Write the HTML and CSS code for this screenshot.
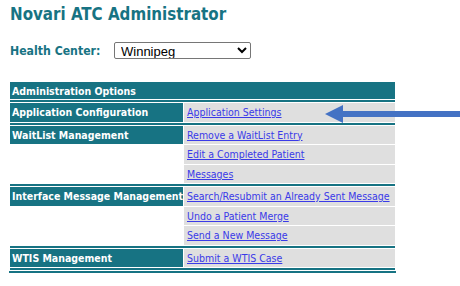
FILE: index.html
```html
<!DOCTYPE html>
<html lang="en">
  <head>
    <title>Novari ATC Administrator</title>
    <link rel="stylesheet" href="styles.css">
  </head>
  <body>
    <h1>Novari ATC Administrator</h1>
    <form id="center-form">
      <label for="health-center">Health Center:</label>
      <select id="health-center">
        <option>Winnipeg</option>
      </select>
    </form>
    <table id="admin-options">
      <colgroup>
        <col class="group-col">
        <col>
      </colgroup>
      <tr><th colspan="2">Administration Options</th></tr>
      <tr class="rule"><td colspan="2"></td></tr>
      <tr>
        <td class="group">Application Configuration</td>
        <td class="item"><a href="#">Application Settings</a></td>
      </tr>
      <tr class="rule"><td colspan="2"></td></tr>
      <tr>
        <td class="group">WaitList Management</td>
        <td class="item"><a href="#">Remove a WaitList Entry</a></td>
      </tr>
      <tr>
        <td></td>
        <td class="item"><a href="#">Edit a Completed Patient</a></td>
      </tr>
      <tr>
        <td></td>
        <td class="item"><a href="#">Messages</a></td>
      </tr>
      <tr class="rule"><td colspan="2"></td></tr>
      <tr>
        <td class="group">Interface Message Management</td>
        <td class="item"><a href="#">Search/Resubmit an Already Sent Message</a></td>
      </tr>
      <tr>
        <td></td>
        <td class="item"><a href="#">Undo a Patient Merge</a></td>
      </tr>
      <tr>
        <td></td>
        <td class="item"><a href="#">Send a New Message</a></td>
      </tr>
      <tr class="rule"><td colspan="2"></td></tr>
      <tr>
        <td class="group">WTIS Management</td>
        <td class="item"><a href="#">Submit a WTIS Case</a></td>
      </tr>
      <tr class="rule"><td colspan="2"></td></tr>
    </table>
    <svg id="pointer" width="140" height="20" viewBox="0 0 140 20">
      <polygon points="0,10 18,1 18,7 140,7 140,13 18,13 18,19" fill="#4472c4" />
    </svg>
  </body>
</html>
```

FILE: styles.css
```css
html, body {
  margin: 0;
  background: #fff;
}

body {
  font-family: "DejaVu Sans Condensed", "DejaVu Sans", sans-serif;
  padding: 0 10px;
  position: relative;
  height: 286px;
  overflow: hidden;
}

h1 {
  color: #177383;
  font-size: 16.8px;
  margin: 0;
  padding-top: 3px;
  line-height: 22px;
}

#center-form {
  margin: 17px 0 0;
  display: flex;
  align-items: center;
}

#center-form label {
  color: #177383;
  font-weight: bold;
  font-size: 12.2px;
  width: 104px;
}

#health-center {
  font-family: "Liberation Sans", sans-serif;
  font-size: 13px;
  width: 137px;
  height: 17px;
  padding: 0 0 0 2px;
  border: 1px solid #767676;
  border-radius: 2px;
  background: #fff;
  color: #000;
}

#admin-options {
  margin: 22px 0 0 -1px;
  width: 387px;
  border-spacing: 1px;
  border-bottom: 2px solid #177383;
  font-size: 10.5px;
  line-height: 14px;
  table-layout: fixed;
}

#admin-options .group-col {
  width: 173px;
}

#admin-options th {
  background: #177383;
  color: #fff;
  text-align: left;
  height: 17px;
  padding: 0 2px;
}

#admin-options td {
  height: 18.5px;
  padding: 0 3px;
  white-space: nowrap;
}

#admin-options .rule td {
  height: 2px;
  padding: 0;
  background: #177383;
}

#admin-options .group {
  background: #177383;
  color: #fff;
  font-weight: bold;
  padding-left: 2px;
}

#admin-options .item {
  background: #dfdfdf;
}

#admin-options a {
  color: #3a3ae8;
}

#pointer {
  position: absolute;
  left: 325px;
  top: 104px;
}
```
